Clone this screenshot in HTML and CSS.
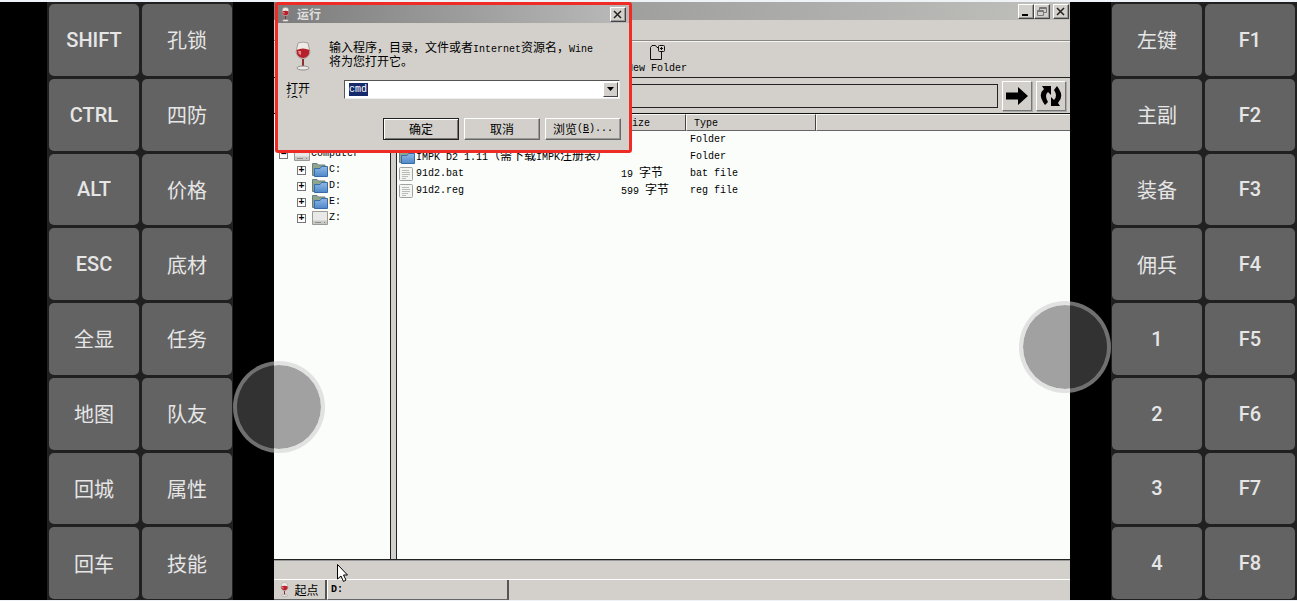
FILE: index.html
```html
<!DOCTYPE html>
<html lang="zh-CN">
<head>
<meta charset="utf-8">
<title>运行</title>
<link rel="stylesheet" href="styles.css">
</head>
<body>
<svg width="0" height="0" class="defs" aria-hidden="true">
  <defs>
    <linearGradient id="blue" x1="0" y1="0" x2="0" y2="1"><stop offset="0" stop-color="#8fb9e6"/><stop offset="1" stop-color="#4f88c8"/></linearGradient>
    <symbol id="glass" viewBox="0 0 18 30">
      <path d="M4 2 Q9 0 14 2 L16 11 Q15 17 9 18 Q3 17 2 11 Z" fill="#efe9e7" stroke="#a5a09d"/>
      <path d="M2.500 9 Q9 6 15.500 9 L15 13 Q13 17 9 17 Q5 17 3 13 Z" fill="#b5202a"/>
      <path d="M4 10 L7 10 L7 14 L5 13 Z" fill="#e98a8c"/>
      <path d="M9 18 V26" stroke="#8c3034" stroke-width="2"/>
      <ellipse cx="9" cy="27" rx="6" ry="2" fill="#eeeceb" stroke="#8f8b89"/>
    </symbol>
    <symbol id="folder" viewBox="0 0 16 14">
      <path d="M.5 12.500 V.5 H5 L6.500 2 H13 V12.500 Z" fill="#8fa58d" stroke="#6c7f80"/>
      <path d="M2.500 13.500 V5.500 H8 L9.500 3.500 H15.500 V13.500 Z" fill="url(#blue)" stroke="#386ca8"/>
    </symbol>
    <symbol id="drive" viewBox="0 0 16 14">
      <path d="M.5 .5 H15.500 V13.500 H.5 Z" fill="#e9e9e7" stroke="#9a9a98"/>
      <path d="M1 9.500 H15 V13 H1 Z" fill="#c9c9c6"/>
      <path d="M3 11.500 H9 M12 11.500 H13" stroke="#8e8e8b"/>
    </symbol>
    <symbol id="doc" viewBox="0 0 14 14">
      <rect x=".5" y=".5" width="13" height="13" rx="1" fill="#f4f4f1" stroke="#a0a39f"/>
      <path d="M3 3.500 H10 M3 5.500 H11 M3 7.500 H11 M3 9.500 H9 M3 11.500 H7" stroke="#b9bcb8"/>
    </symbol>
  </defs>
</svg>
<div class="screen">
  <div class="pad pad-left">
    <button>SHIFT</button><button class="han">孔锁</button>
    <button>CTRL</button><button class="han">四防</button>
    <button>ALT</button><button class="han">价格</button>
    <button>ESC</button><button class="han">底材</button>
    <button class="han">全显</button><button class="han">任务</button>
    <button class="han">地图</button><button class="han">队友</button>
    <button class="han">回城</button><button class="han">属性</button>
    <button class="han">回车</button><button class="han">技能</button>
  </div>
  <div class="gutter"><div class="knob knob-left"></div></div>

  <main class="desktop">
    <header class="titlebar">
      <div class="window-buttons">
        <button class="tool" aria-label="最小化"><svg width="12" height="11"><path d="M2 9H8" stroke="#000" stroke-width="2"/></svg></button>
        <button class="tool" aria-label="还原"><svg width="12" height="11" fill="none" stroke="#777"><path d="M3.500 4V1.500H10.500V6.500H8M3 2.500H11M1.500 4.500H7.500V9.500H1.500ZM1 5.500H8"/></svg></button>
        <button class="tool close" aria-label="关闭"><svg width="12" height="11"><path d="M2 2L9 9M9 2L2 9" stroke="#222" stroke-width="1.500"/></svg></button>
      </div>
    </header>
    <div class="menubar"></div>
    <div class="toolbar">
      <button class="new-folder">
        <svg width="16" height="17" fill="none" stroke="#111"><path d="M9 3.500H8L6.500 1.500H3L1.500 3.500V15.500H12.500V8"/><rect x="9.500" y="1.500" width="6" height="6" rx="1"/><path d="M12.500 3V6M11 4.500H14"/></svg>
        <span>New Folder</span>
      </button>
    </div>
    <div class="addressbar">
      <input class="address" type="text" aria-label="地址">
      <button class="nav" aria-label="转到"><svg width="24" height="24"><path d="M1 8.500H13V3L23 12L13 21V15.500H1Z"/></svg></button>
      <button class="nav" aria-label="刷新"><svg width="24" height="24"><path d="M4 18Q-1 10 5 5L3 2H12V11L9 8Q5 11 9 18L6 21ZM20 5Q25 13 19 19L21 22H12V13L15 16Q19 12 15 6L18 2Z"/></svg></button>
    </div>
    <div class="panes">
      <nav class="tree">
        <div class="node root"><span class="expander">−</span><svg width="16" height="14"><use href="#drive"/></svg><span>Computer</span></div>
        <div class="children">
          <div class="node"><span class="expander">+</span><svg width="16" height="14"><use href="#folder"/></svg><span>C:</span></div>
          <div class="node"><span class="expander">+</span><svg width="16" height="14"><use href="#folder"/></svg><span>D:</span></div>
          <div class="node"><span class="expander">+</span><svg width="16" height="14"><use href="#folder"/></svg><span>E:</span></div>
          <div class="node"><span class="expander">+</span><svg width="16" height="14"><use href="#drive"/></svg><span>Z:</span></div>
        </div>
      </nav>
      <section class="files">
        <table>
          <colgroup><col class="c-name"><col class="c-size"><col class="c-type"><col></colgroup>
          <thead><tr><th></th><th>Size</th><th>Type</th><th></th></tr></thead>
          <tbody>
            <tr><td></td><td></td><td>Folder</td><td></td></tr>
            <tr><td><div class="file"><svg width="16" height="14"><use href="#folder"/></svg><span>IMPK D2 1.11<span class="zh">（需下载</span>IMPK<span class="zh">注册表）</span></span></div></td><td></td><td>Folder</td><td></td></tr>
            <tr><td><div class="file"><svg width="14" height="14"><use href="#doc"/></svg><span>91d2.bat</span></div></td><td>19 <span class="zh">字节</span></td><td>bat file</td><td></td></tr>
            <tr><td><div class="file"><svg width="14" height="14"><use href="#doc"/></svg><span>91d2.reg</span></div></td><td>599 <span class="zh">字节</span></td><td>reg file</td><td></td></tr>
          </tbody>
        </table>
      </section>
    </div>
    <div class="statusbar"></div>
    <footer class="taskbar">
      <button class="start"><svg width="9" height="15"><use href="#glass"/></svg><span class="zh">起点</span></button>
      <button class="task">D:</button>
    </footer>

    <form class="dialog" onsubmit="return false">
      <div class="dialog-title">
        <svg width="9" height="15"><use href="#glass"/></svg>
        <span class="zh">运行</span>
        <button type="button" class="tool" aria-label="关闭"><svg width="12" height="11"><path d="M2 2L9 9M9 2L2 9" stroke="#222" stroke-width="1.500"/></svg></button>
      </div>
      <div class="message">
        <svg width="18" height="30"><use href="#glass"/></svg>
        <p class="zh">输入程序，目录，文件或者<span class="mono">Internet</span>资源名，<span class="mono">Wine</span><br>将为您打开它。</p>
      </div>
      <div class="open-row">
        <label class="zh" for="command">打开 (O):</label>
        <div class="combo">
          <input id="command" type="text" value="cmd">
          <button type="button" aria-label="展开"><svg width="9" height="6"><path d="M1 0H8L4.500 4Z"/></svg></button>
        </div>
      </div>
      <div class="actions">
        <button class="push default zh">确定</button>
        <button type="button" class="push zh">取消</button>
        <button type="button" class="push zh">浏览<span class="mono">(<u>B</u>)...</span></button>
      </div>
    </form>
    <svg class="cursor" width="13" height="20"><path d="M1.500 1.500V16L5 13L7.500 18.500L10 17L7.500 12H11.500Z" fill="#fff" stroke="#000"/></svg>
  </main>

  <div class="gutter"><div class="knob knob-right"></div></div>
  <div class="pad pad-right">
    <button class="han">左键</button><button>F1</button>
    <button class="han">主副</button><button>F2</button>
    <button class="han">装备</button><button>F3</button>
    <button class="han">佣兵</button><button>F4</button>
    <button>1</button><button>F5</button>
    <button>2</button><button>F6</button>
    <button>3</button><button>F7</button>
    <button>4</button><button>F8</button>
  </div>
</div>
</body>
</html>
```

FILE: styles.css
```css
* { box-sizing: border-box; }
body {
  margin: 0;
  padding: 2px 0 1px;
  height: 100vh;
  background: #eff2f6;
  overflow: hidden;
}
button, input { font: inherit; color: inherit; padding: 0; margin: 0; border: 0; border-radius: 0; }
button { display: flex; align-items: center; justify-content: center; background: none; }
svg { flex: none; display: block; }
.defs { position: absolute; }

.screen {
  display: grid;
  grid-template-columns: 186px 41px minmax(0, 1fr) 41px 186px;
  height: 100%;
  padding-left: 47px;
  background: #000;
}

/* Key pads */
.pad {
  display: grid;
  grid-template-columns: 1fr 1fr;
  grid-auto-rows: 1fr;
  gap: 3px;
  padding: 2px 2px 1px 1px;
  background: #202020;
  color: #e6e6e6;
  font: 500 20px Roboto, "Noto Sans CJK SC", sans-serif;
}
.pad-left { padding: 2px 1px 1px 2px; }
.pad button { background: #636363; border-radius: 5px; }
.pad .han { font-weight: 400; }

/* Joysticks */
.gutter { position: relative; z-index: 2; }
.knob {
  position: absolute;
  width: 92px;
  height: 92px;
  border: 4px solid rgba(204, 204, 204, .55);
  border-radius: 50%;
  background: rgba(90, 90, 90, .56) padding-box;
}
.knob-left { left: 0; bottom: 147px; }
.knob-right { right: 0; bottom: 207px; }

/* File manager */
.desktop {
  position: relative;
  display: flex;
  flex-direction: column;
  min-width: 0;
  background: #d3d0cb;
  color: #000;
  font: 10px/12px "Liberation Mono", "Noto Sans CJK SC", monospace;
}
.zh { font: 12px/12px "Noto Sans CJK SC", sans-serif; }
.mono { font: 10px/10px "Liberation Mono", monospace; }

.titlebar {
  display: flex;
  justify-content: flex-end;
  align-items: center;
  height: 18px;
  padding-right: 1px;
  background: linear-gradient(90deg, #858585, #c0c0bd);
}
.window-buttons { display: flex; }
.tool {
  width: 16px;
  height: 15px;
  background: #d3d0cb;
  border: 1px solid;
  border-color: #fff #444 #444 #fff;
  box-shadow: inset -1px -1px #999;
}
.close { margin-left: 3px; }
.menubar { height: 21px; border-bottom: 1px solid #8a8885; }
.toolbar {
  display: flex;
  height: 37px;
  padding: 1px 0 0 353px;
  border-top: 1px solid #f5f4f1;
  border-bottom: 1px solid #222;
}
.new-folder { flex-direction: column; gap: 2px; height: 33px; }
.addressbar {
  display: flex;
  align-items: center;
  gap: 4px;
  height: 36px;
  padding: 0 4px 0 3px;
  border-bottom: 1px solid #111;
}
.address { flex: 1; min-width: 0; height: 24px; background: #d3d0cb; border: 1px solid #222; }
.nav {
  width: 30px;
  height: 30px;
  border: 1px solid;
  border-color: #fff #777 #777 #fff;
  box-shadow: 1px 1px #aaa;
}
.panes { display: flex; flex: 1; min-height: 0; border-bottom: 1px solid #222; }
.tree {
  flex: none;
  width: 117px;
  padding: 32px 0 0 5px;
  background: #fafdfa;
  border-right: 1px solid #222;
}
.node { display: flex; align-items: center; height: 16px; gap: 1px; }
.expander {
  width: 9px;
  height: 9px;
  border: 1px solid #777;
  background: #fff;
  font-weight: bold;
  line-height: 7px;
  text-align: center;
}
.children { margin-left: 18px; }
.node svg { margin-left: 5px; }
.files {
  flex: 1;
  min-width: 0;
  margin-left: 5px;
  background: #fafdfa;
  border-left: 1px solid #222;
}
table { width: 100%; table-layout: fixed; border-collapse: separate; border-spacing: 0; }
.c-name { width: 221px; }
.c-size { width: 68px; }
.c-type { width: 130px; }
th {
  height: 17px;
  padding: 2px 0 0 7px;
  text-align: left;
  font-weight: normal;
  background: #d3d0cb;
  border: 1px solid;
  border-color: #f8f7f4 #444 #666 #f8f7f4;
}
th:last-child { border-right: 0; }
td { height: 17px; padding: 0 0 0 4px; white-space: nowrap; }
td:first-child { padding-left: 2px; }
td:nth-child(2) { padding-left: 3px; }
.file { display: flex; align-items: center; gap: 3px; height: 16px; }
.file svg[width="16"] { margin-right: -2px; }
.statusbar { height: 19px; border-top: 1px solid #999; }
.taskbar { display: flex; height: 21px; border-top: 1px solid #fff; }
.start, .task { border-right: 2px solid #555; border-bottom: 1px solid #666; }
.start { gap: 5px; width: 53px; }
.task { justify-content: flex-start; width: 182px; padding-left: 3px; border-left: 1px solid #fff; font-weight: bold; }

/* Run dialog */
.dialog {
  position: absolute;
  top: 0;
  left: 1px;
  width: 357px;
  margin: 0;
  padding-bottom: 10px;
  background: #d3d0cb;
  border: 3px solid #ee2b24;
  border-radius: 3px;
}
.dialog-title {
  display: flex;
  align-items: center;
  gap: 7px;
  height: 18px;
  padding: 0 3px;
  color: #dedede;
  background: linear-gradient(90deg, #7c7c7c, #bababa);
}
.dialog-title .tool { margin-left: auto; }
.dialog-title .zh { font-weight: bold; }
.message { display: flex; gap: 17px; padding: 18px 0 0 16px; }
.message p { margin: 0; white-space: nowrap; }
.open-row { display: flex; gap: 32px; padding: 9px 9px 0 8px; }
.open-row label { width: 26px; height: 18px; padding-top: 2px; overflow: hidden; }
.combo {
  display: flex;
  flex: 1;
  height: 19px;
  padding: 1px;
  background: #fff;
  border: 1px solid;
  border-color: #555 #eee #eee #555;
}
.combo input {
  flex: 1;
  min-width: 0;
  padding-left: 3px;
  color: #fff;
  background: linear-gradient(#16296b, #16296b) 3px 1px / 19px 13px no-repeat #fff;
}
.combo button { width: 15px; background: #d3d0cb; border: 1px solid; border-color: #fff #444 #444 #fff; }
.actions { display: flex; justify-content: flex-end; gap: 5px; padding: 19px 8px 0 0; }
.push {
  width: 76px;
  height: 22px;
  border: 1px solid;
  border-color: #fff #666 #666 #fff;
  box-shadow: inset -1px -1px #999;
}
.default { border-color: #222; box-shadow: inset 1px 1px #fff, inset -1px -1px #777; }
.cursor { position: absolute; left: 62px; bottom: 17px; }
```
